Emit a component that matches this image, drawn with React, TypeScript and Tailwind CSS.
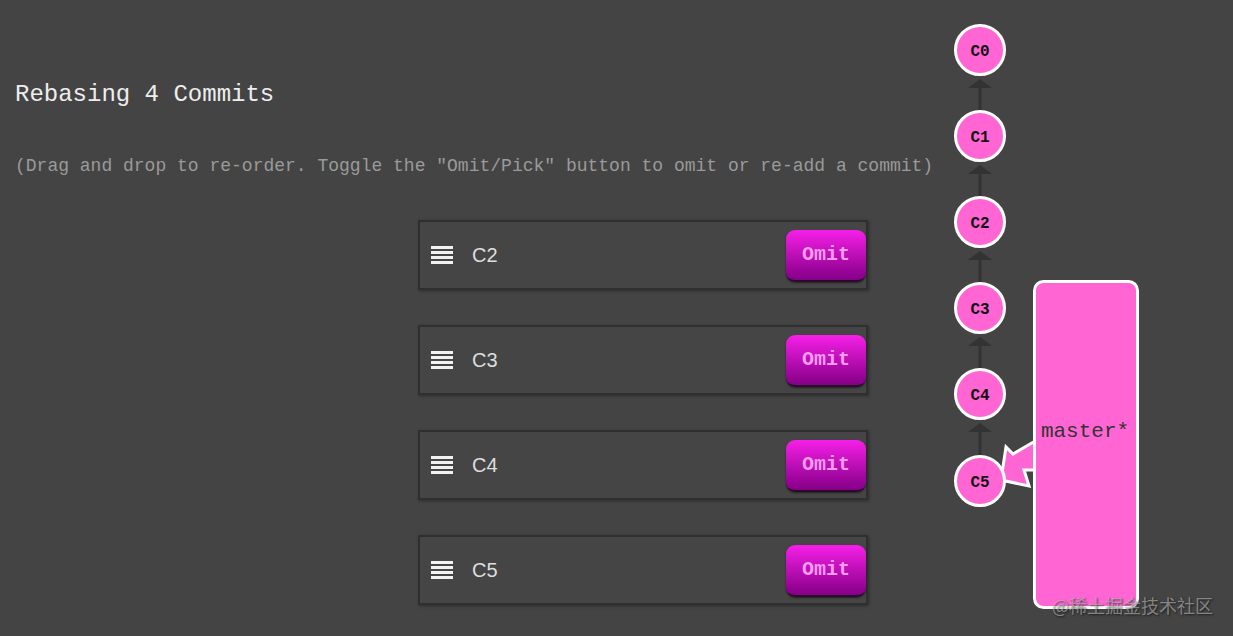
const commits = ['C2', 'C3', 'C4', 'C5']

const nodes = [
  { id: 'C0', y: 50 },
  { id: 'C1', y: 136 },
  { id: 'C2', y: 222 },
  { id: 'C3', y: 308 },
  { id: 'C4', y: 394 },
  { id: 'C5', y: 481 },
]

function Handle() {
  return (
    <div className="flex flex-col gap-[2px] w-[22px]">
      <div className="h-[3px] bg-[#f2f2f2]" />
      <div className="h-[3px] bg-[#f2f2f2]" />
      <div className="h-[3px] bg-[#f2f2f2]" />
      <div className="h-[3px] bg-[#f2f2f2]" />
    </div>
  )
}

function CommitRow({ name }: { name: string }) {
  return (
    <div className="w-[450px] h-[70px] flex items-center border-2 border-[#2f2f2f] bg-[#454545] shadow-[1px_1px_3px_rgba(0,0,0,0.35)]">
      <div className="ml-[11px]">
        <Handle />
      </div>
      <span className="ml-[19px] text-[20px] text-[#dedede] font-['Liberation_Sans',Arial,sans-serif]">{name}</span>
      <button className="ml-auto mr-0 mt-[2px] w-[80px] h-[52px] rounded-[9px] bg-gradient-to-b from-[#f71fe8] to-[#850087] border-b-2 border-[#2a0a2a] shadow-[0_1px_2px_rgba(0,0,0,0.5)] text-[20px] font-bold text-[#ff9bf0] font-['Liberation_Mono','Courier_New',monospace]">
        Omit
      </button>
    </div>
  )
}

function Graph() {
  return (
    <svg
      className="absolute left-[930px] top-0"
      width={230}
      height={636}
      viewBox="930 0 230 636"
    >
      {nodes.slice(0, -1).map((n, i) => (
        <g key={n.id}>
          <line x1={980} y1={n.y + 36} x2={980} y2={nodes[i + 1].y - 24} stroke="#333" strokeWidth={3} />
          <polygon points={`980,${n.y + 29} 968,${n.y + 38} 992,${n.y + 38}`} fill="#333" />
        </g>
      ))}
      <polygon
        points="1001,480 1006,447 1013,454 1042,437 1042,470 1024,470 1029,486"
        fill="#ff66d4"
        stroke="#fff"
        strokeWidth={3}
        strokeLinejoin="miter"
      />
      <rect x={1034.5} y={281.5} width={103} height={326} rx={9} fill="#ff66d4" stroke="#fff" strokeWidth={3} />
      <text
        x={1085}
        y={437}
        textAnchor="middle"
        fontFamily="'Liberation Mono', 'Courier New', monospace"
        fontSize={21}
        fill="#333"
      >
        master*
      </text>
      {nodes.map((n) => (
        <g key={n.id}>
          <circle cx={980} cy={n.y} r={24.5} fill="#ff66d4" stroke="#fff" strokeWidth={3} />
          <text
            x={980}
            y={n.y + 5.5}
            textAnchor="middle"
            fontFamily="'Liberation Mono', 'Courier New', monospace"
            fontWeight="bold"
            fontSize={16}
            fill="#111"
          >
            {n.id}
          </text>
        </g>
      ))}
    </svg>
  )
}

export default function App() {
  return (
    <div className="relative w-full h-[636px] bg-[#444444] overflow-hidden font-['Liberation_Mono','Courier_New',monospace]">
      <div className="flex flex-col pl-[15px] pt-[81px]">
        <h1 className="text-[24px] leading-[28px] text-[#eeeeee]">Rebasing 4 Commits</h1>
        <p className="mt-[45px] text-[18px] leading-[24px] text-[#9a9a9a]">
          (Drag and drop to re-order. Toggle the "Omit/Pick" button to omit or re-add a commit)
        </p>
        <div className="mt-[42px] ml-[403px] flex flex-col gap-[35px]">
          {commits.map((c) => (
            <CommitRow key={c} name={c} />
          ))}
        </div>
      </div>
      <Graph />
      <span className="absolute left-[1052px] top-[592px] text-[18px] text-[#bdbdbd]/60 [text-shadow:1px_1px_2px_rgba(0,0,0,0.6)] font-['Noto_Sans_CJK_SC',sans-serif]">
        @稀土掘金技术社区
      </span>
    </div>
  )
}
